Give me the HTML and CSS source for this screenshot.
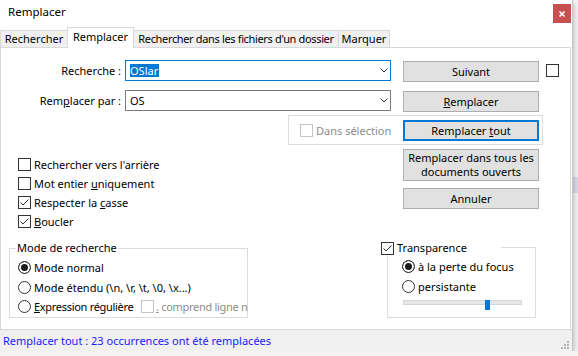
FILE: index.html
```html
<!DOCTYPE html>
<html lang="fr">
<head>
<meta charset="utf-8">
<title>Remplacer</title>
<link rel="stylesheet" href="styles.css">
</head>
<body>
<div class="win">
  <div class="titlebar">
    <span class="title">Remplacer</span>
    <span class="close"><svg width="18" height="19" viewBox="0 0 18 19"><path d="M6.5 7.5 L11.5 12.5 M11.5 7.5 L6.5 12.5" stroke="#fff" stroke-width="1.6" fill="none"/></svg></span>
  </div>
  <div class="tabs">
    <div class="tab t1">Rechercher</div>
    <div class="tab t2 active">Remplacer</div>
    <div class="tab t3">Rechercher dans les fichiers d'un dossier</div>
    <div class="tab t4">Marquer</div>
  </div>
  <div class="panel">
    <div class="row r1">
      <span class="lbl">Recherche :</span>
      <div class="combo focus"><span class="val"><span class="sel">OSlar</span></span><svg class="chev" width="8" height="5" viewBox="0 0 8 5"><path d="M0.5 0.5 L4 4 L7.5 0.5" stroke="#333" fill="none"/></svg></div>
      <button class="btn">Suivant</button>
      <span class="cb solo"></span>
    </div>
    <div class="row r2">
      <span class="lbl">Rem<u>p</u>lacer par :</span>
      <div class="combo"><span class="val">OS</span><svg class="chev" width="8" height="5" viewBox="0 0 8 5"><path d="M0.5 0.5 L4 4 L7.5 0.5" stroke="#333" fill="none"/></svg></div>
      <button class="btn"><u>R</u>emplacer</button>
    </div>
    <div class="selbox">
      <span class="cb dis"></span><span class="dis-t">Dans sélection</span>
      <button class="btn def">Remplacer <u>t</u>out</button>
    </div>
    <div class="mid">
      <div class="opts">
        <div class="opt"><span class="cb"></span><span>Rechercher vers l'arrière</span></div>
        <div class="opt"><span class="cb"></span><span>Mot entier <u>u</u>niquement</span></div>
        <div class="opt"><span class="cb on"></span><span>Respecter la <u>c</u>asse</span></div>
        <div class="opt"><span class="cb on"></span><span><u>B</u>oucler</span></div>
      </div>
      <div class="btncol">
        <button class="btn tall">Remplacer dans tous les<br>documents ouverts</button>
        <button class="btn cancel">Annuler</button>
      </div>
    </div>
    <div class="bottom">
      <fieldset class="grp mode">
        <legend>Mode de recherche</legend>
        <div class="opt r"><span class="rd on"></span><span>Mode normal</span></div>
        <div class="opt r"><span class="rd"></span><span>Mode étendu (\n, \r, \t, \0, \x...)</span></div>
        <div class="opt r last"><span class="rd"></span><span class="rx"><u>E</u>xpression régulière</span><span class="cb dis"></span><span class="nl"><u>.</u> comprend ligne n</span></div>
      </fieldset>
      <div class="tgrp">
        <div class="tlegend"><span class="cb on"></span><span>Transparence</span></div>
        <div class="opt r first"><span class="rd on"></span><span>à la perte du focus</span></div>
        <div class="opt r"><span class="rd"></span><span>persistante</span></div>
        <div class="slider"><div class="track"></div><div class="thumb"></div></div>
      </div>
    </div>
  </div>
  <div class="status">
    <span class="msg">Remplacer tout : 23 occurrences ont été remplacées</span>
    <svg class="grip" width="9" height="9" viewBox="0 0 9 9"><g fill="#b5b5b5"><rect x="6" y="0" width="2" height="2"/><rect x="3" y="3" width="2" height="2"/><rect x="6" y="3" width="2" height="2"/><rect x="0" y="6" width="2" height="2"/><rect x="3" y="6" width="2" height="2"/><rect x="6" y="6" width="2" height="2"/></g></svg>
  </div>
</div>
</body>
</html>
```

FILE: styles.css
```css
html {
  height: 100%;
  background: linear-gradient(#f3f3f3 0, #f3f3f3 177px, #d9d9ec 177px, #d9d9ec 193px, #f3f3f3 193px);
}
body {
  margin: 0;
  font-family: "Noto Sans", "Open Sans", sans-serif;
  font-size: 11px;
  color: #000;
}
u { text-decoration: underline; text-underline-offset: 1px; }

.win {
  width: 572px;
  height: 351px;
  background: #fff;
  border-right: 1px solid #c6c6c6;
  box-shadow: 0 3px 6px rgba(0,0,0,0.3);
  display: flex;
  flex-direction: column;
}

.titlebar {
  height: 27px;
  box-sizing: border-box;
  padding-top: 4px;
  display: flex;
  align-items: flex-start;
}
.title {
  padding-left: 8px;
  line-height: 16px;
  font-size: 11.5px;
}
.close {
  margin-left: auto;
  margin-right: 1px;
  width: 18px;
  height: 19px;
  background: #c75050;
  display: flex;
}

.tabs {
  height: 20px;
  display: flex;
  align-items: flex-end;
  position: relative;
  z-index: 1;
}
.tab {
  box-sizing: border-box;
  height: 17px;
  border: 1px solid #d9d9d9;
  border-bottom: none;
  background: #f0f0f0;
  line-height: 16px;
  text-align: center;
  white-space: nowrap;
  overflow: hidden;
  margin-left: -1px;
}
.t1 { width: 68px; margin-left: 0; }
.t2 { width: 67px; }
.t3 { width: 206px; letter-spacing: -0.35px; }
.t4 { width: 52px; }
.tab.active {
  height: 21px;
  margin-bottom: -1px;
  background: #fff;
  padding-top: 1px;
  position: relative;
  z-index: 2;
}

.panel {
  width: 571px;
  height: 282px;
  box-sizing: border-box;
  border: 1px solid #d9d9d9;
  border-bottom: none;
  display: flex;
  flex-direction: column;
}

.row {
  display: flex;
  align-items: flex-start;
}
.r1 { margin-top: 12px; }
.r2 { margin-top: 8px; }
.lbl {
  width: 120px;
  margin-right: 4px;
  text-align: right;
  line-height: 21px;
  white-space: nowrap;
}
.combo {
  width: 266px;
  height: 21px;
  box-sizing: border-box;
  border: 1px solid #7a7a7a;
  display: flex;
  align-items: center;
  padding-left: 4px;
}
.combo.focus { border-color: #0078d7; }
.val { line-height: 13px; }
.sel {
  display: inline-block;
  background: #0078d7;
  color: #fff;
  line-height: 13px;
  padding: 0 1px 0 0;
}
.chev { margin-left: auto; margin-right: 2px; }

.btn {
  font: inherit;
  color: #000;
  margin: 0;
  padding: 0;
  width: 136px;
  height: 21px;
  box-sizing: border-box;
  background: #e1e1e1;
  border: 1px solid #adadad;
  line-height: 14px;
}
.row .btn { margin-left: 12px; margin-top: 1px; }
.btn.def { border: 2px solid #0078d7; margin-left: auto; }

.cb {
  display: inline-block;
  flex: none;
  width: 13px;
  height: 13px;
  box-sizing: border-box;
  border: 1px solid #333;
  background: #fff;
  margin-right: 3px;
}
.cb.on {
  background: #fff url("data:image/svg+xml,%3Csvg xmlns='http://www.w3.org/2000/svg' width='11' height='11' viewBox='0 0 11 11'%3E%3Cpath d='M1.5 5.5 L4 8 L9.5 2.5' stroke='%23333' stroke-width='1' fill='none'/%3E%3C/svg%3E") no-repeat center;
}
.cb.dis { border-color: #c6c6c6; }
.cb.solo { margin-left: 7px; margin-top: 4px; margin-right: 0; }

.selbox {
  margin-top: 3px;
  margin-left: 287px;
  width: 255px;
  height: 30px;
  box-sizing: border-box;
  border: 1px solid #dcdcdc;
  padding: 4px 3px 3px 11px;
  display: flex;
  align-items: center;
}
.dis-t { color: #8d8d8d; }

.mid {
  margin-top: 4px;
  height: 92px;
  display: flex;
}
.opts {
  width: 402px;
  box-sizing: border-box;
  padding-left: 17px;
  padding-top: 6px;
}
.opt {
  height: 19px;
  display: flex;
  align-items: center;
  white-space: nowrap;
}
.btncol { display: flex; flex-direction: column; }
.btn.tall { height: 32px; }
.btn.cancel { margin-top: 7px; }

.bottom { display: flex; align-items: flex-start; }
.grp {
  margin: 0;
  border: 1px solid #dcdcdc;
  box-sizing: border-box;
  height: 77px;
  min-width: 0;
}
.grp legend {
  padding: 0 1px;
  line-height: 14px;
}
.mode {
  margin-left: 8px;
  width: 239px;
  padding: 2px 0 0 8px;
}
.mode legend { margin-left: -2px; }
.opt.r { height: 20px; }
.opt.r.last { height: 19px; }
.rd {
  flex: none;
  width: 13px;
  height: 13px;
  box-sizing: border-box;
  border: 1px solid #333;
  border-radius: 50%;
  background: #fff;
  margin-right: 3px;
}
.rd.on {
  background: #1b1b1b;
  box-shadow: inset 0 0 0 2px #fff;
}
.rx { width: 107px; flex: none; letter-spacing: -0.3px; }
.mode .cb { margin-right: 2px; }
.nl {
  color: #8d8d8d;
  white-space: nowrap;
  letter-spacing: -0.3px;
}

.tgrp {
  margin-left: 139px;
  margin-top: 6px;
  width: 149px;
  height: 71px;
  box-sizing: border-box;
  border: 1px solid #dcdcdc;
  padding-left: 14px;
}
.tlegend {
  display: flex;
  align-items: center;
  width: 120px;
  height: 14px;
  margin: -7px 0 0 -21px;
  background: #fff;
  line-height: 14px;
}
.opt.r.first { margin-top: 1px; }
.slider {
  position: relative;
  margin-top: 0;
  margin-left: 1px;
  width: 119px;
  height: 10px;
}
.track {
  margin-top: 4px;
  height: 5px;
  box-sizing: border-box;
  background: #e7e7e7;
  border: 1px solid #d6d6d6;
}
.thumb {
  position: absolute;
  left: 82px;
  top: 0;
  width: 5px;
  height: 10px;
  background: #0078d7;
}

.status {
  height: 22px;
  box-sizing: border-box;
  border-top: 1px solid #d7d7d7;
  background: #f0f0f0;
  display: flex;
  align-items: center;
  padding-left: 3px;
}
.msg { color: #1a1aff; line-height: 20px; }
.grip {
  margin-left: auto;
  margin-right: 2px;
  align-self: flex-end;
  margin-bottom: 1px;
}
```
